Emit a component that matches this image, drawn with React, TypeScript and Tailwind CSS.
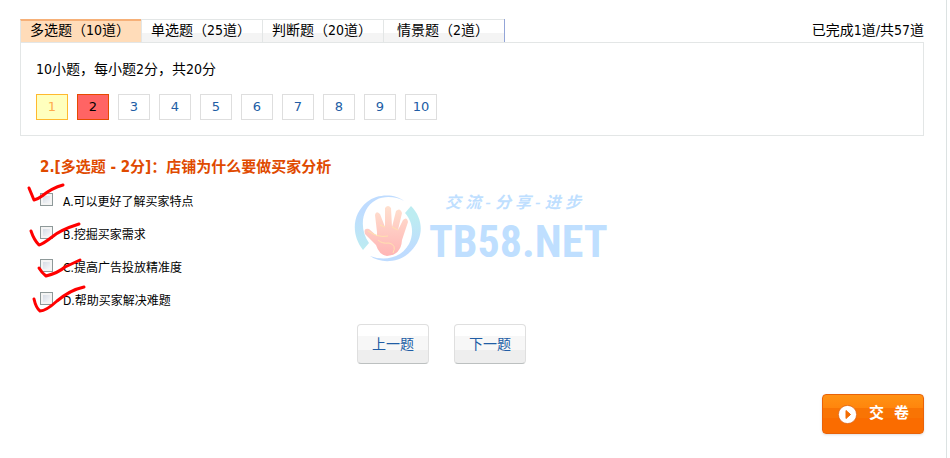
import { useState } from "react";

const tabs = ["多选题（10道）", "单选题（25道）", "判断题（20道）", "情景题（2道）"];
const options = ["A.可以更好了解买家特点", "B.挖掘买家需求", "C.提高广告投放精准度", "D.帮助买家解决难题"];
const marks = [
  "M29 188 L34 200 Q38 199 42 196 Q52 188 63 185",
  "M31 231 Q34 240 39 245 Q43 244 52 237 Q60 230 79 224",
  "M39 268 Q42 273 46 276 Q58 273 65 267 L80 260",
  "M34 299 Q36 308 40 311 Q46 311 57 301 Q70 290 84 287",
];

function Tabs() {
  return (
    <nav className="flex h-[23px] border-r border-[#93a5d8]">
      {tabs.map((tab, i) => (
        <button
          key={tab}
          type="button"
          className={
            i === 0
              ? "flex w-[121px] justify-center border-t-2 border-l border-t-[#f6b078] border-l-[#e3e6e6] bg-[#ffdcb9] pr-[2px] leading-[18px]"
              : "flex w-[121px] justify-center border-t border-l border-[#e3e6e6] bg-linear-to-b from-white from-60% to-[#f4f4f4] to-60% pr-[2px] leading-5"
          }
        >
          {tab}
        </button>
      ))}
    </nav>
  );
}

function Watermark() {
  return (
    <div className="pointer-events-none absolute top-[195px] left-[354px] flex gap-2 text-[#bfdfff]">
      <svg width="67" height="67" viewBox="0 0 67 67" aria-hidden="true">
        <defs>
          <linearGradient id="palm" x1="0" y1="0" x2="0" y2="1">
            <stop offset="0" stopColor="#ffe0cf" />
            <stop offset="1" stopColor="#ffb5b5" />
          </linearGradient>
          <linearGradient id="left-arc" x1="0" y1="0" x2="0" y2="1">
            <stop offset=".3" stopColor="#bfdcff" />
            <stop offset="1" stopColor="#bcecf1" />
          </linearGradient>
          <linearGradient id="right-arc" x1="0" y1="0" x2="0" y2="1">
            <stop offset=".2" stopColor="#bcecf1" />
            <stop offset=".8" stopColor="#bfdcff" />
          </linearGradient>
        </defs>
        <path d="M50 6 C42 -1 24 -2 13 7 C-2 19 -3 40 9 55 L15 48 C5 34 7 13 22 5 C31 0 43 2 50 6Z" fill="url(#left-arc)" />
        <path d="M57 11 C70 24 70 43 57 56 C46 68 27 69 16 61 C32 67 48 62 55 49 C60 39 59 27 51 18Z" fill="url(#right-arc)" />
        <path d="M23 37 L21 20 Q22 15 26 19 L31 32 L31 13 Q34 9 37 13 L38 32 L42 16 Q46 12 48 18 L44 35 L49 25 Q53 21 54 27 L48 45 Q47 60 33 61 Q25 60 22 50 L11 39 Q9 33 15 34 L23 41Z" fill="url(#palm)" />
        <path d="M24 45 Q28 49 35 48 Q43 50 39 58 M14 36 Q24 43 34 41 M26 30 L31 32 M38 32 L44 35" fill="none" stroke="#ffe2af" />
      </svg>
      <div className="whitespace-nowrap">
        <div className="ml-4 flex w-[136px] justify-between font-['Liberation_Serif','Noto_Sans_CJK_SC',serif] text-base leading-4 font-bold italic">
          {["交", "流", "-", "分", "享", "-", "进", "步"].map((glyph, i) => (
            <span key={i}>{glyph}</span>
          ))}
        </div>
        <div className="font-['Liberation_Sans_Narrow','Roboto_Condensed','Open_Sans_Condensed',sans-serif] text-[44px] leading-[62px] font-bold">TB58.NET</div>
      </div>
    </div>
  );
}

export default function App() {
  const [current, setCurrent] = useState(2);
  return (
    <div className="min-h-screen bg-white pr-[3px] font-['DejaVu_Sans_Condensed','Noto_Sans_CJK_SC',sans-serif] text-sm text-black">
      <main className="relative min-h-screen border-r border-[#dce2e2] pt-[19px] pr-[22px] pb-6 pl-5">
        <header className="flex justify-between">
          <Tabs />
          <p className="leading-[22px]">已完成1道/共57道</p>
        </header>
        <section className="border border-[#e3e6e6] px-[15px] pt-4 pb-[15px]">
          <p className="leading-5">10小题，每小题2分，共20分</p>
          <div className="mt-[15px] flex flex-wrap gap-[9px] font-['DejaVu_Sans',sans-serif] text-[13px]">
            {Array.from({ length: 10 }, (_, i) => i + 1).map((n) => (
              <button
                key={n}
                type="button"
                onClick={() => setCurrent(n)}
                className={
                  n === current
                    ? "h-[26px] w-8 border border-[#e64a00] bg-[#ff6464]"
                    : n === 1
                      ? "h-[26px] w-8 border border-[#ffb92e] bg-[#ffffbe] text-[#ffab4e]"
                      : "h-[26px] w-8 border border-[#dedede] bg-white text-[#215da5]"
                }
              >
                {n}
              </button>
            ))}
          </div>
        </section>
        <form className="pt-5" onSubmit={(e) => e.preventDefault()}>
          <fieldset className="pl-5">
            <legend className="text-[15px] leading-[22px] font-bold text-[#e04a00]">2.[多选题 - 2分]：店铺为什么要做买家分析</legend>
            <div className="pt-[7px]">
              {options.map((option) => (
                <label key={option} className="flex h-[33px] items-center gap-[10px] text-xs">
                  <input
                    type="checkbox"
                    className="mb-1 size-[13px] appearance-none border border-[#8e9999] bg-linear-to-br from-[#cdd4df] to-white shadow-[inset_0_0_0_2px_#f4f4f4] checked:bg-[#215da5]"
                  />
                  {option}
                </label>
              ))}
            </div>
          </fieldset>
          <div className="mt-[7px] flex justify-center gap-[25px] pr-[61px]">
            {["上一题", "下一题"].map((label) => (
              <button
                key={label}
                type="button"
                className="h-10 w-[72px] rounded-sm border border-[#dfdfdf] border-b-[#bcc0c0] bg-[linear-gradient(#fff_30%,#f7f7f7_30%_65%,#eee_65%)] text-[#215da5]"
              >
                {label}
              </button>
            ))}
          </div>
          <div className="mt-[30px] flex justify-end">
            <button
              type="submit"
              className="flex h-10 w-[102px] items-center gap-3 rounded-sm border border-[#e96208] bg-[linear-gradient(#ff9214,#ff850c_35%,#f97404_35%_60%,#fa6c00_60%)] pl-[15px] text-[15px] font-bold text-white shadow-sm"
            >
              <svg width="19" height="19" viewBox="0 0 19 19" aria-hidden="true">
                <circle cx="9.5" cy="9.5" r="9.1" fill="#fff" stroke="#d95b10" strokeWidth=".7" />
                <path d="M8 5.5 L12.5 9.5 L8 13.5Z" fill="#f36b00" stroke="#f36b00" strokeLinejoin="round" />
              </svg>
              <span className="flex gap-[10px]">
                <span>交</span>
                <span>卷</span>
              </span>
            </button>
          </div>
        </form>
        <Watermark />
        <svg className="pointer-events-none absolute top-0 left-0" width="100" height="330" viewBox="0 0 100 330" fill="none" stroke="#f00" strokeWidth="3" strokeLinecap="round" strokeLinejoin="round" aria-hidden="true">
          {marks.map((mark) => (
            <path key={mark} d={mark} />
          ))}
        </svg>
      </main>
    </div>
  );
}
